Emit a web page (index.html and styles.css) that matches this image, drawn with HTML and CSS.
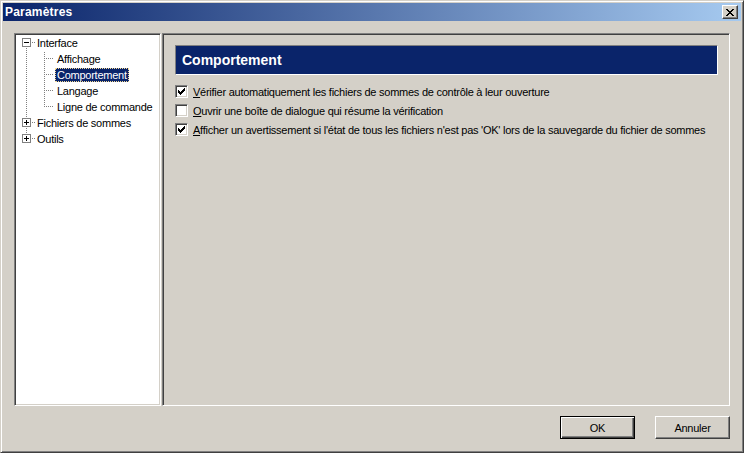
FILE: index.html
```html
<!DOCTYPE html>
<html lang="fr">
<head>
<meta charset="utf-8">
<title>Paramètres</title>
<link rel="stylesheet" href="styles.css">
</head>
<body>
<div class="window">
  <div class="titlebar">
    <span class="title">Paramètres</span>
    <button class="close" aria-label="Fermer">
      <svg width="8" height="7" viewBox="0 0 8 7" shape-rendering="crispEdges"><path fill="#000" d="M0 0h2v1H0zM6 0h2v1H6zM1 1h2v1H1zM5 1h2v1H5zM2 2h4v1H2zM3 3h2v1H3zM2 4h4v1H2zM1 5h2v1H1zM5 5h2v1H5zM0 6h2v1H0zM6 6h2v1H6z"/></svg>
    </button>
  </div>
  <div class="client">
    <div class="panes">
      <div class="tree">
        <div class="row">
          <svg class="lead" width="19" height="16" shape-rendering="crispEdges">
            <line x1="10.5" y1="13" x2="10.5" y2="16" stroke="#808080" stroke-dasharray="1 1"/>
            <line x1="16" y1="7.5" x2="19" y2="7.5" stroke="#808080" stroke-dasharray="1 1"/>
            <rect x="6.5" y="3.5" width="8" height="8" fill="#fff" stroke="#808080"/>
            <rect x="8" y="7" width="5" height="1" fill="#000"/>
          </svg>
          <span class="label">Interface</span>
        </div>
        <div class="row">
          <svg class="lead" width="39" height="16" shape-rendering="crispEdges">
            <line x1="10.5" y1="1" x2="10.5" y2="16" stroke="#808080" stroke-dasharray="1 1"/>
            <line x1="28.5" y1="1" x2="28.5" y2="16" stroke="#808080" stroke-dasharray="1 1"/>
            <line x1="30" y1="7.5" x2="38" y2="7.5" stroke="#808080" stroke-dasharray="1 1"/>
          </svg>
          <span class="label">Affichage</span>
        </div>
        <div class="row">
          <svg class="lead" width="39" height="16" shape-rendering="crispEdges">
            <line x1="10.5" y1="1" x2="10.5" y2="16" stroke="#808080" stroke-dasharray="1 1"/>
            <line x1="28.5" y1="1" x2="28.5" y2="16" stroke="#808080" stroke-dasharray="1 1"/>
            <line x1="30" y1="7.5" x2="38" y2="7.5" stroke="#808080" stroke-dasharray="1 1"/>
          </svg>
          <span class="label sel">Comportement</span>
        </div>
        <div class="row">
          <svg class="lead" width="39" height="16" shape-rendering="crispEdges">
            <line x1="10.5" y1="1" x2="10.5" y2="16" stroke="#808080" stroke-dasharray="1 1"/>
            <line x1="28.5" y1="1" x2="28.5" y2="16" stroke="#808080" stroke-dasharray="1 1"/>
            <line x1="30" y1="7.5" x2="38" y2="7.5" stroke="#808080" stroke-dasharray="1 1"/>
          </svg>
          <span class="label">Langage</span>
        </div>
        <div class="row">
          <svg class="lead" width="39" height="16" shape-rendering="crispEdges">
            <line x1="10.5" y1="1" x2="10.5" y2="16" stroke="#808080" stroke-dasharray="1 1"/>
            <line x1="28.5" y1="1" x2="28.5" y2="8" stroke="#808080" stroke-dasharray="1 1"/>
            <line x1="30" y1="7.5" x2="38" y2="7.5" stroke="#808080" stroke-dasharray="1 1"/>
          </svg>
          <span class="label">Ligne de commande</span>
        </div>
        <div class="row">
          <svg class="lead" width="19" height="16" shape-rendering="crispEdges">
            <line x1="10.5" y1="1" x2="10.5" y2="3" stroke="#808080" stroke-dasharray="1 1"/>
            <line x1="10.5" y1="13" x2="10.5" y2="16" stroke="#808080" stroke-dasharray="1 1"/>
            <line x1="16" y1="7.5" x2="19" y2="7.5" stroke="#808080" stroke-dasharray="1 1"/>
            <rect x="6.5" y="3.5" width="8" height="8" fill="#fff" stroke="#808080"/>
            <rect x="8" y="7" width="5" height="1" fill="#000"/>
            <rect x="10" y="5" width="1" height="5" fill="#000"/>
          </svg>
          <span class="label">Fichiers de sommes</span>
        </div>
        <div class="row">
          <svg class="lead" width="19" height="16" shape-rendering="crispEdges">
            <line x1="10.5" y1="1" x2="10.5" y2="3" stroke="#808080" stroke-dasharray="1 1"/>
            <line x1="16" y1="7.5" x2="19" y2="7.5" stroke="#808080" stroke-dasharray="1 1"/>
            <rect x="6.5" y="3.5" width="8" height="8" fill="#fff" stroke="#808080"/>
            <rect x="8" y="7" width="5" height="1" fill="#000"/>
            <rect x="10" y="5" width="1" height="5" fill="#000"/>
          </svg>
          <span class="label">Outils</span>
        </div>
      </div>
      <div class="panel">
        <div class="header">Comportement</div>
        <div class="options">
          <div class="opt">
            <span class="cb"><svg width="9" height="9" viewBox="0 0 9 9" shape-rendering="crispEdges"><path fill="#000" d="M1 3h1v3H1zM2 4h1v3H2zM3 5h1v3H3zM4 4h1v3H4zM5 3h1v3H5zM6 2h1v3H6zM7 1h1v3H7z"/></svg></span>
            <span class="text"><u>V</u>érifier automatiquement les fichiers de sommes de contrôle à leur ouverture</span>
          </div>
          <div class="opt">
            <span class="cb"></span>
            <span class="text"><u>O</u>uvrir une boîte de dialogue qui résume la vérification</span>
          </div>
          <div class="opt">
            <span class="cb"><svg width="9" height="9" viewBox="0 0 9 9" shape-rendering="crispEdges"><path fill="#000" d="M1 3h1v3H1zM2 4h1v3H2zM3 5h1v3H3zM4 4h1v3H4zM5 3h1v3H5zM6 2h1v3H6zM7 1h1v3H7z"/></svg></span>
            <span class="text"><u>A</u>fficher un avertissement si l'état de tous les fichiers n'est pas 'OK' lors de la sauvegarde du fichier de sommes</span>
          </div>
        </div>
      </div>
    </div>
    <div class="buttons">
      <button class="btn default">OK</button>
      <button class="btn">Annuler</button>
    </div>
  </div>
</div>
</body>
</html>
```

FILE: styles.css
```css
html, body {
  margin: 0;
  padding: 0;
  width: 744px;
  height: 453px;
  overflow: hidden;
  background: #d4d0c8;
}

body {
  font-family: "Liberation Sans", Arial, sans-serif;
  font-size: 11px;
  letter-spacing: -0.25px;
  color: #000;
}

.window {
  box-sizing: border-box;
  width: 744px;
  height: 453px;
  background: #d4d0c8;
  border: 1px solid;
  border-color: #d4d0c8 #404040 #404040 #d4d0c8;
  box-shadow: inset 1px 1px #fff, inset -1px -1px #808080;
  padding: 2px;
  display: flex;
  flex-direction: column;
}

.titlebar {
  height: 18px;
  flex: none;
  background: linear-gradient(to right, #0a246a, #a6caf0);
  display: flex;
  align-items: center;
  padding: 0 2px;
}

.title {
  flex: 1;
  color: #fff;
  font-weight: bold;
  font-size: 12px;
  letter-spacing: 0.2px;
}

.close {
  width: 16px;
  height: 14px;
  margin-right: 1px;
  padding: 0;
  box-sizing: border-box;
  background: #d4d0c8;
  border: 1px solid;
  border-color: #fff #404040 #404040 #fff;
  box-shadow: inset -1px -1px #808080;
  display: flex;
  align-items: center;
  justify-content: center;
}

.close svg {
  display: block;
}

.client {
  flex: 1;
  margin-top: 1px;
  padding: 11px;
  display: flex;
  flex-direction: column;
}

.panes {
  display: flex;
  gap: 1px;
  height: 373px;
  flex: none;
}

.tree {
  box-sizing: border-box;
  width: 147px;
  flex: none;
  background: #fff;
  border: 1px solid;
  border-color: #808080 #fff #fff #808080;
  box-shadow: inset 1px 1px #404040, inset -1px -1px #d4d0c8;
  padding: 1px 0 0 1px;
}

.row {
  display: flex;
  align-items: center;
  height: 16px;
}

.lead {
  display: block;
  flex: none;
}

.label {
  box-sizing: border-box;
  height: 14px;
  line-height: 12px;
  padding: 0 1px;
  border: 1px solid transparent;
  white-space: nowrap;
}

.label.sel {
  background: #0a246a;
  color: #fff;
  border: 1px dotted #f5db95;
}

.panel {
  flex: 1;
  box-sizing: border-box;
  border: 1px solid;
  border-color: #808080 #fff #fff #808080;
  box-shadow: inset 1px 1px #404040, inset -1px -1px #d4d0c8;
  padding: 11px 11px 0 12px;
}

.header {
  box-sizing: border-box;
  height: 30px;
  background: #0a246a;
  color: #fff;
  border: 1px solid;
  border-color: #808080 #fff #fff #808080;
  font-weight: bold;
  font-size: 14px;
  letter-spacing: 0;
  display: flex;
  align-items: center;
  padding-left: 6px;
}

.options {
  margin-top: 10px;
  display: flex;
  flex-direction: column;
  gap: 6px;
}

.opt {
  display: flex;
  align-items: center;
  gap: 5px;
  height: 13px;
  white-space: nowrap;
}

.cb {
  box-sizing: border-box;
  width: 13px;
  height: 13px;
  flex: none;
  background: #fff;
  border: 1px solid;
  border-color: #808080 #fff #fff #808080;
  box-shadow: inset 1px 1px #404040, inset -1px -1px #d4d0c8;
  display: flex;
  align-items: center;
  justify-content: center;
}

.cb svg {
  display: block;
}

.buttons {
  margin-top: 10px;
  display: flex;
  justify-content: flex-end;
  gap: 20px;
}

.btn {
  box-sizing: border-box;
  width: 75px;
  height: 23px;
  padding: 0;
  background: #d4d0c8;
  color: #000;
  font-family: inherit;
  font-size: 11px;
  letter-spacing: -0.25px;
  border: 1px solid;
  border-color: #fff #404040 #404040 #fff;
  box-shadow: inset -1px -1px #808080;
}

.btn.default {
  border-color: #000;
  box-shadow: inset 1px 1px #fff, inset -1px -1px #404040, inset -2px -2px #808080;
}
```
